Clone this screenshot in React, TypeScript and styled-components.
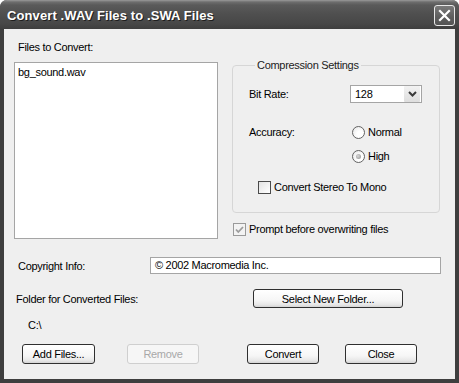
import React from "react";
import styled, { createGlobalStyle } from "styled-components";

const GlobalStyle = createGlobalStyle`
  html, body { margin: 0; padding: 0; background: #ffffff; }
  * { box-sizing: border-box; }
  body { font-family: "Liberation Sans", Arial, sans-serif; font-size: 11px; letter-spacing: -0.3px; color: #000; }
`;

const Window = styled.div`
  width: 459px;
  height: 383px;
  display: flex;
  flex-direction: column;
  border-radius: 7px 7px 0 0;
  overflow: hidden;
  background: #3e3e3e;
`;

const TitleBar = styled.div`
  height: 29px;
  flex: none;
  display: flex;
  align-items: center;
  justify-content: space-between;
  padding: 0 4px 0 7px;
  background: linear-gradient(#9a9a9a 0, #6e6e6e 2px, #5a5a5a 5px, #4f4f4f 14px, #474747 24px, #3e3e3e 29px);
`;

const Title = styled.div`
  font-family: "Liberation Sans", Arial, sans-serif;
  font-weight: bold;
  font-size: 13px;
  letter-spacing: 0.1px;
  color: #ffffff;
  text-shadow: 1px 1px 0 #1e1e1e;
  margin-top: 1px;
`;

const CloseButton = styled.div`
  width: 21px;
  height: 21px;
  border: 1px solid #e8e8e8;
  border-radius: 3px;
  background: linear-gradient(#7a7a7a, #5d5d5d 60%, #545454);
  display: flex;
  align-items: center;
  justify-content: center;
  margin-top: 1px;
`;

const Frame = styled.div`
  flex: 1;
  display: flex;
  padding: 0 4px 4px 4px;
  background: #3e3e3e;
`;

const Body = styled.div`
  flex: 1;
  display: flex;
  flex-direction: column;
  background: #efefef;
  padding: 11px 0 0 10px;
`;

const TopSection = styled.div`
  display: flex;
`;

const LeftColumn = styled.div`
  width: 204px;
  display: flex;
  flex-direction: column;
`;

const RightColumn = styled.div`
  width: 208px;
  margin-left: 14px;
  padding-top: 18px;
  display: flex;
  flex-direction: column;
`;

const Label = styled.div<{ $indent?: number; $width?: number }>`
  line-height: 14px;
  height: 14px;
  white-space: nowrap;
  padding-left: ${(p) => p.$indent ?? 0}px;
  width: ${(p) => (p.$width ? `${p.$width}px` : "auto")};
  flex: none;
`;

const ListBox = styled.div`
  margin-top: 8px;
  height: 177px;
  background: #ffffff;
  border: 1px solid #a5a5a5;
  padding: 2px 3px;
`;

const ListItem = styled.div`
  line-height: 14px;
`;

const GroupBox = styled.fieldset`
  margin: 0;
  min-width: 0;
  border: 1px solid #d6d6d6;
  border-radius: 4px;
  padding: 13px 0 18px 16px;
  display: flex;
  flex-direction: column;
`;

const Legend = styled.legend`
  padding: 0 2px;
  margin-left: 6px;
  line-height: 14px;
  color: #222;
`;

const Row = styled.div<{ $top?: number; $indent?: number; $align?: string }>`
  display: flex;
  align-items: ${(p) => p.$align ?? "center"};
  margin-top: ${(p) => p.$top ?? 0}px;
  padding-left: ${(p) => p.$indent ?? 0}px;
`;

const Select = styled.div`
  width: 72px;
  height: 18px;
  border: 1px solid #a5a5a5;
  background: #ffffff;
  display: flex;
  align-items: center;
  justify-content: space-between;
  padding: 0 1px 0 4px;
  line-height: 14px;
`;

const SelectArrow = styled.div`
  width: 16px;
  height: 16px;
  background: linear-gradient(#f2f2f2, #dedede);
  border-radius: 1px;
  display: flex;
  align-items: center;
  justify-content: center;
`;

const RadioGroup = styled.div`
  display: flex;
  flex-direction: column;
  gap: 10px;
  padding-left: 2px;
`;

const Option = styled.div`
  display: flex;
  align-items: center;
  height: 14px;
  line-height: 14px;
  gap: 3px;
  white-space: nowrap;
`;

const RadioCircle = styled.span<{ $checked?: boolean }>`
  width: 13px;
  height: 13px;
  border-radius: 50%;
  border: 1px solid #626262;
  background: radial-gradient(circle at 65% 65%, #ffffff 30%, #e4e4e4 100%);
  display: flex;
  align-items: center;
  justify-content: center;
  flex: none;
  &::after {
    content: "";
    display: ${(p) => (p.$checked ? "block" : "none")};
    width: 5px;
    height: 5px;
    border-radius: 50%;
    background: radial-gradient(circle at 40% 40%, #d8d8d8, #8e8e8e);
  }
`;

const CheckBox = styled.span<{ $muted?: boolean }>`
  width: 13px;
  height: 13px;
  border: 1px solid ${(p) => (p.$muted ? "#9a9a9a" : "#4a4a4a")};
  background: ${(p) => (p.$muted ? "#f3f3f3" : "linear-gradient(135deg, #e2e2e2, #ffffff)")};
  display: flex;
  align-items: center;
  justify-content: center;
  flex: none;
`;

const TextBox = styled.div`
  width: 291px;
  height: 17px;
  border: 1px solid #a5a5a5;
  background: #ffffff;
  padding: 0 4px;
  line-height: 15px;
  white-space: nowrap;
`;

const Button = styled.button<{ $width: number; $height?: number; $gap?: number; $disabled?: boolean }>`
  width: ${(p) => p.$width}px;
  height: ${(p) => p.$height ?? 20}px;
  margin: 0 0 0 ${(p) => p.$gap ?? 0}px;
  padding: 0;
  font: inherit;
  letter-spacing: inherit;
  color: ${(p) => (p.$disabled ? "#a8a8a8" : "#000")};
  border: 1px solid ${(p) => (p.$disabled ? "#cfcfcf" : "#2f2f2f")};
  border-radius: 3px;
  background: ${(p) =>
    p.$disabled ? "#f6f6f6" : "linear-gradient(#ffffff 0, #f6f6f6 60%, #e8e8e8 85%, #d4d4d4 100%)"};
  line-height: 16px;
  flex: none;
`;

const ButtonRow = styled.div`
  display: flex;
  margin-top: 12px;
  padding-left: 8px;
`;

export default function App() {
  return (
    <>
      <GlobalStyle />
      <Window>
        <TitleBar>
          <Title>Convert .WAV Files to .SWA Files</Title>
          <CloseButton>
            <svg width="13" height="13" viewBox="0 0 13 13">
              <path d="M2 2 L11 11 M11 2 L2 11" stroke="#ffffff" strokeWidth="2.2" strokeLinecap="square" />
            </svg>
          </CloseButton>
        </TitleBar>
        <Frame>
          <Body>
            <TopSection>
              <LeftColumn>
                <Label $indent={4}>Files to Convert:</Label>
                <ListBox>
                  <ListItem>bg_sound.wav</ListItem>
                </ListBox>
              </LeftColumn>
              <RightColumn>
                <GroupBox>
                  <Legend>Compression Settings</Legend>
                  <Row>
                    <Label $width={101}>Bit Rate:</Label>
                    <Select>
                      <span>128</span>
                      <SelectArrow>
                        <svg width="9" height="6" viewBox="0 0 9 6">
                          <path d="M1 1 L4.5 4.5 L8 1" fill="none" stroke="#3a3a3a" strokeWidth="2" />
                        </svg>
                      </SelectArrow>
                    </Select>
                  </Row>
                  <Row $top={22} $align="flex-start">
                    <Label $width={101}>Accuracy:</Label>
                    <RadioGroup>
                      <Option>
                        <RadioCircle />
                        Normal
                      </Option>
                      <Option>
                        <RadioCircle $checked />
                        High
                      </Option>
                    </RadioGroup>
                  </Row>
                  <Row $top={17} $indent={9}>
                    <Option>
                      <CheckBox />
                      Convert Stereo To Mono
                    </Option>
                  </Row>
                </GroupBox>
                <Row $top={9} $indent={1}>
                  <Option>
                    <CheckBox $muted>
                      <svg width="9" height="9" viewBox="0 0 9 9">
                        <path d="M1 4.5 L3.3 7 L8 2" fill="none" stroke="#9c9c9c" strokeWidth="1.8" />
                      </svg>
                    </CheckBox>
                    Prompt before overwriting files
                  </Option>
                </Row>
              </RightColumn>
            </TopSection>
            <Row $top={18}>
              <Label $indent={4} $width={136}>Copyright Info:</Label>
              <TextBox>© 2002 Macromedia Inc.</TextBox>
            </Row>
            <Row $top={15}>
              <Label $indent={2} $width={239}>Folder for Converted Files:</Label>
              <Button $width={150} $height={19}>Select New Folder...</Button>
            </Row>
            <Row $top={10}>
              <Label $indent={14}>C:\</Label>
            </Row>
            <ButtonRow>
              <Button $width={73}>Add Files...</Button>
              <Button $width={72} $gap={32} $disabled>Remove</Button>
              <Button $width={72} $gap={48}>Convert</Button>
              <Button $width={72} $gap={26}>Close</Button>
            </ButtonRow>
          </Body>
        </Frame>
      </Window>
    </>
  );
}
